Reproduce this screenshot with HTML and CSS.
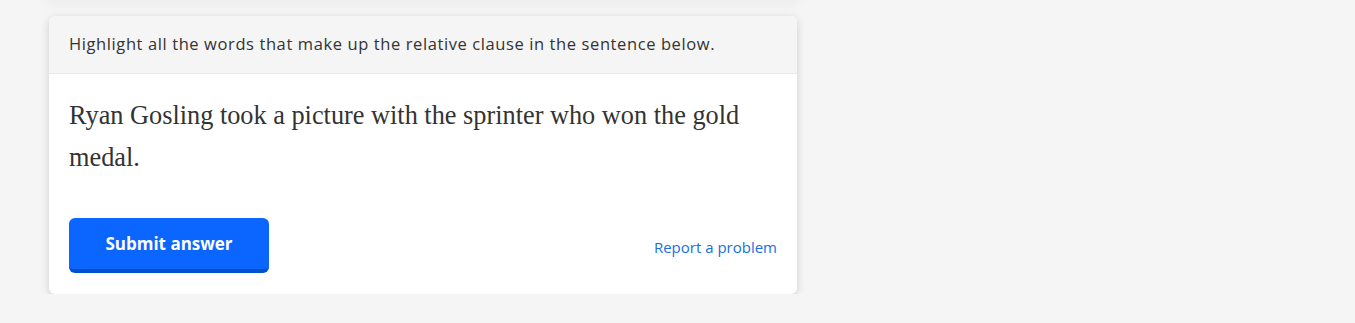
FILE: index.html
```html
<!DOCTYPE html>
<html lang="en">
<head>
  <meta charset="UTF-8">
  <meta name="viewport" content="width=device-width, initial-scale=1.0">
  <title>Relative clause</title>

  <link rel="stylesheet" href="styles.css">
</head>
<body>
  <div class="page">
    <!-- Tail of the previous question card -->
    <div class="card card-prev"></div>

    <div class="card">
      <div class="card-header">
        Highlight all the words that make up the relative clause in the sentence below.
      </div>
      <div class="card-body">
        <p class="sentence">Ryan Gosling took a picture with the sprinter who won the gold medal.</p>
        <div class="card-footer">
          <div class="button">Submit answer</div>
          <a class="report" href="#">Report a problem</a>
        </div>
      </div>
    </div>
  </div>
</body>
</html>
```

FILE: styles.css
```css
body {
  margin: 0;
  background-color: #f5f5f5;
  font-family: "Open Sans", "Noto Sans", sans-serif;
  color: #333;
}

.page {
  width: 748px;
  margin-left: 49px;
  display: flex;
  flex-direction: column;
  gap: 16px;
}

.card {
  background-color: #fff;
  border-radius: 6px;
  box-shadow: 0 2px 8px rgba(0, 0, 0, 0.16);
  overflow: hidden;
}

.card-prev {
  height: 0;
  box-shadow: 0 0 12px 2px rgba(0, 0, 0, 0.1);
}

.card-header {
  background-color: #f5f5f5;
  border-bottom: 1px solid #e8e8e8;
  padding: 16px 20px 0;
  height: 41px;
  box-sizing: content-box;
  font-size: 16.5px;
  letter-spacing: 0.6px;
  color: #333;
}

.card-body {
  padding: 21px 20px 21px;
}

.sentence {
  margin: 0;
  font-family: "Liberation Serif", Georgia, serif;
  font-size: 26.3px;
  line-height: 42px;
  color: #333;
}

.card-footer {
  display: flex;
  align-items: center;
  justify-content: space-between;
  margin-top: 39px;
}

.button {
  width: 200px;
  height: 51px;
  line-height: 51px;
  border-bottom: 4px solid #0051cc;
  border-radius: 6px;
  background-color: #0a66ff;
  color: #fff;
  font-weight: bold;
  font-size: 17px;
  text-align: center;
  cursor: pointer;
  user-select: none;
}

.report {
  color: #1a6fe0;
  font-size: 15px;
  text-decoration: none;
  margin-top: 2px;
}
```
